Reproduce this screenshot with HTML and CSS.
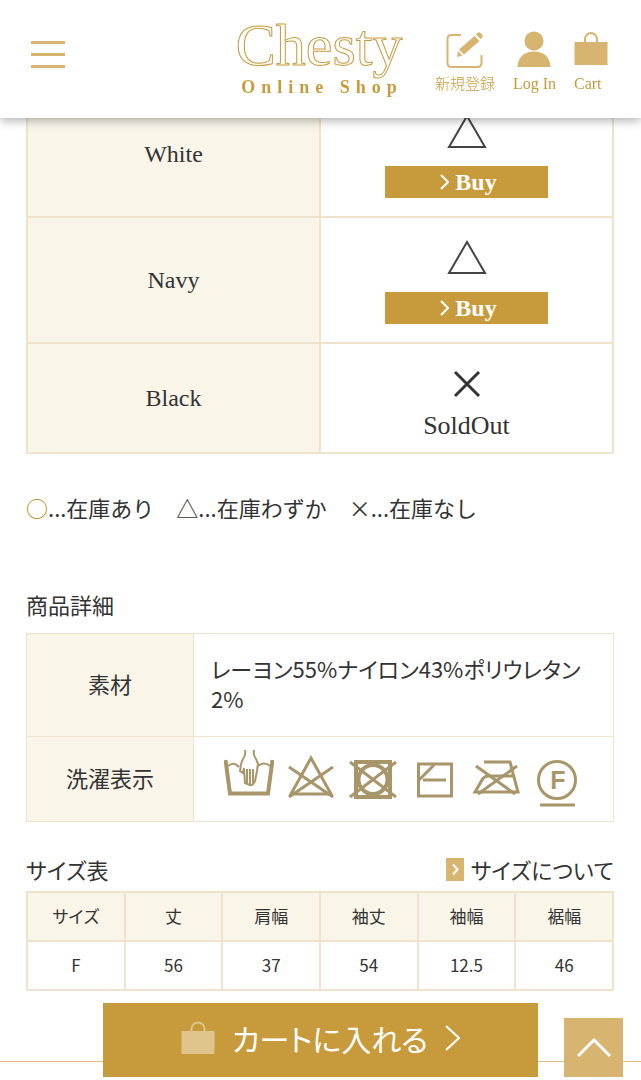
FILE: index.html
```
<!DOCTYPE html>
<html lang="ja">
  <head>
    <meta charset="UTF-8" />
    <meta name="viewport" content="width=device-width, initial-scale=1.0" />
    <title>Chesty Online Shop</title>
    <link rel="stylesheet" href="styles.css">
  </head>
  <body>
    <header class="header">
      <button class="menu" type="button" aria-label="メニュー">
        <svg width="34" height="28" viewBox="0 0 34 28">
          <path d="M0 2.5H34M0 14.5H34M0 26.5H34" />
        </svg>
      </button>
      <a class="logo" href="#">
        <span class="logo-name">Chesty</span>
        <span class="logo-sub">Online Shop</span>
      </a>
      <nav class="nav">
        <a class="nav-item" href="#">
          <svg width="38" height="38" viewBox="0 0 38 38">
            <path class="line" d="M15 4H5.500Q1.500 4 1.500 8V32Q1.500 36 5.500 36H31Q35.500 36 35.500 31.500V24" />
            <path class="fill" d="M28.500 5L33.500 10L18 23.500L13 18.500Z" />
            <path class="fill" d="M30 3.500L31.500 2Q33 .5 35 2.500L36 3.500Q37.500 5.500 36 7L34.800 8.200Z" />
            <path class="fill" d="M12 20L16.500 24.500L11 26Z" />
          </svg>
          <span>新規登録</span>
        </a>
        <a class="nav-item" href="#">
          <svg width="34" height="38" viewBox="0 0 34 38">
            <circle class="fill" cx="17" cy="10" r="9.500" />
            <path class="fill" d="M.5 36C1 26 7 20.500 17 20.500S33 26 33.500 36Z" />
          </svg>
          <span>Log In</span>
        </a>
        <a class="nav-item nav-cart" href="#">
          <svg width="34" height="38" viewBox="0 0 34 38">
            <path class="fill" d="M.5 11H33.500V34H.5Z" />
            <path class="line" d="M11 12V8.500A6 6.500 0 0 1 23 8.500V12" />
          </svg>
          <span>Cart</span>
        </a>
      </nav>
    </header>

    <main class="main">
      <table class="stock">
        <tr>
          <th>White</th>
          <td>
            <svg class="mark" role="img" aria-label="在庫わずか" width="40" height="36" viewBox="0 0 40 36"><path d="M20 2L38 33H2Z" /></svg>
            <button class="buy" type="button">
              <svg width="9" height="16" viewBox="0 0 9 16"><path d="M1 1L8 8L1 15" /></svg>Buy
            </button>
          </td>
        </tr>
        <tr>
          <th>Navy</th>
          <td>
            <svg class="mark" role="img" aria-label="在庫わずか" width="40" height="36" viewBox="0 0 40 36"><path d="M20 2L38 33H2Z" /></svg>
            <button class="buy" type="button">
              <svg width="9" height="16" viewBox="0 0 9 16"><path d="M1 1L8 8L1 15" /></svg>Buy
            </button>
          </td>
        </tr>
        <tr>
          <th>Black</th>
          <td>
            <svg class="mark cross" role="img" aria-label="在庫なし" width="40" height="36" viewBox="0 0 40 36"><path d="M8 6L32 30M32 6L8 30" /></svg>
            <p class="soldout">SoldOut</p>
          </td>
        </tr>
      </table>

      <p class="legend"><span class="in-stock">○</span>...在庫あり　△...在庫わずか　×...在庫なし</p>

      <h2 class="title">商品詳細</h2>
      <table class="detail">
        <tr>
          <th>素材</th>
          <td>レーヨン55%ナイロン43%ポリウレタン2%</td>
        </tr>
        <tr>
          <th>洗濯表示</th>
          <td class="care-cell">
            <div class="care">
              <!-- hand wash -->
              <svg width="50" height="60" viewBox="0 0 50 60">
                <path class="thick" d="M1.500 11L6 44.500H44L48.500 11" />
                <path d="M4 17Q10 12 15 18M34 17Q40 12 46 17" />
                <path d="M21 1Q22 6 19 10L17 15L16 22L19 24L20 19M30 1Q29 6 32 10L34 15L33 22L31 32Q29 37 26 36L21 34L20 20" />
                <path d="M23 20V34M26 20V35M29 20V34" />
              </svg>
              <!-- no bleach -->
              <svg width="50" height="60" viewBox="0 0 50 60">
                <path class="mid" d="M25 9L5 45H45Z" />
                <path class="mid" d="M3 18L47 48M47 18L3 48" />
              </svg>
              <!-- no tumble dry -->
              <svg width="50" height="60" viewBox="0 0 50 60">
                <path class="thick" d="M8 13H42V48H8Z" />
                <circle class="thick" cx="25" cy="30.500" r="14.500" />
                <path class="mid" d="M2 13L48 48M48 13L2 48" />
              </svg>
              <!-- line dry in the shade -->
              <svg width="50" height="60" viewBox="0 0 50 60">
                <path class="mid" d="M8.500 15H41.500V47H8.500Z" />
                <path class="mid" d="M9 31L24 16M13 31H36" />
              </svg>
              <!-- no iron -->
              <svg width="50" height="60" viewBox="0 0 50 60">
                <path class="mid" d="M12 13H38L46 43H3L10 31Q12 27 17 27H41" />
                <path class="mid" d="M4 17L43 45M45 17L6 45" />
              </svg>
              <!-- dry clean F -->
              <svg width="50" height="60" viewBox="0 0 50 60">
                <circle class="mid" cx="23" cy="31" r="18.500" />
                <path class="mid" d="M6 56H41" />
                <text x="24" y="40" text-anchor="middle">F</text>
              </svg>
            </div>
          </td>
        </tr>
      </table>

      <div class="size-head">
        <h2 class="title">サイズ表</h2>
        <a class="size-link" href="#">
          <svg width="18" height="23" viewBox="0 0 18 23"><path d="M0 0H18V23H0Z" /><path class="arrow" d="M7 6.500L11.500 11.500L7 16.500" /></svg>サイズについて
        </a>
      </div>
      <table class="size">
        <tr>
          <th>サイズ</th>
          <th>丈</th>
          <th>肩幅</th>
          <th>袖丈</th>
          <th>袖幅</th>
          <th>裾幅</th>
        </tr>
        <tr>
          <td>F</td>
          <td>56</td>
          <td>37</td>
          <td>54</td>
          <td>12.5</td>
          <td>46</td>
        </tr>
      </table>
    </main>

    <footer class="footer"></footer>

    <button class="add-cart" type="button">
      <svg width="34" height="34" viewBox="0 0 34 34">
        <path class="bag" d="M.5 10H33.500V33H.5Z" />
        <path class="handle" d="M10.500 11V8A6.500 6.500 0 0 1 23.500 8V11" />
      </svg>
      <span>カートに入れる</span>
      <svg width="15" height="26" viewBox="0 0 15 26"><path class="arrow" d="M1 1L14 13L1 25" /></svg>
    </button>
    <a class="to-top" href="#" aria-label="ページの先頭へ">
      <svg width="34" height="20" viewBox="0 0 34 20"><path d="M1 18L17 2L33 18" /></svg>
    </a>
  </body>
</html>
```
FILE: styles.css
```
* {
  margin: 0;
  padding: 0;
  box-sizing: border-box;
}
body {
  font-family: "Noto Sans CJK JP", sans-serif;
  font-feature-settings: "palt";
  font-kerning: none;
  font-size: 22px;
  line-height: 30px;
  color: #333;
  background: #fff;
}
a {
  color: inherit;
  text-decoration: none;
}
button {
  border: none;
  font: inherit;
  font-feature-settings: inherit;
  cursor: pointer;
}
svg {
  display: block;
  flex: none;
  fill: none;
}

/* header */
.header {
  position: fixed;
  top: 0;
  left: 0;
  right: 0;
  z-index: 2;
  height: 118px;
  padding: 0 33px 0 31px;
  display: flex;
  align-items: flex-start;
  background: #fff;
  box-shadow: 0 2px 10px rgba(0, 0, 0, 0.35);
}
.menu {
  margin-top: 40px;
  background: none;
}
.menu svg {
  stroke: #d7b570;
  stroke-width: 3;
}
.logo {
  margin: 12px 32px 0 auto;
  display: flex;
  flex-direction: column;
  align-items: center;
  font-family: "Liberation Serif", serif;
  color: #c79b3c;
}
.logo-name {
  font-size: 60px;
  line-height: 66px;
  color: #fff;
  -webkit-text-stroke: 1px #c79b3c;
}
.logo-sub {
  padding-left: 6px;
  font-size: 18px;
  line-height: 18px;
  font-weight: bold;
  letter-spacing: 6px;
}
.nav {
  margin-top: 31px;
  display: flex;
  gap: 18px;
}
.nav-item {
  display: flex;
  flex-direction: column;
  align-items: center;
  gap: 5px;
  font-family: "Liberation Serif", "Noto Sans CJK JP", serif;
  font-size: 16px;
  font-weight: 300;
  line-height: 20px;
  color: #c79b3c;
}
.nav-item:first-child {
  font-size: 15px;
}
.nav-cart {
  align-items: flex-start;
}
.nav-item .fill {
  fill: #d7b570;
}
.nav-item .line {
  stroke: #d7b570;
  stroke-width: 2;
}

.main {
  padding: 90px 27px 0 26px;
}

/* tables */
table {
  width: 100%;
  table-layout: fixed;
  border-collapse: collapse;
}
th,
td {
  border: 2px solid #efe3cd;
  text-align: center;
  font-weight: normal;
}
th {
  background: #faf5e9;
}
.stock th {
  font-family: "Liberation Serif", serif;
  font-size: 24px;
}
.stock td {
  padding: 22px 0 18px;
}
.stock tr:last-child td {
  padding: 22px 0 11px;
}
.mark {
  margin: 0 auto;
  stroke: #444;
  stroke-width: 2;
}
.cross {
  stroke: #333;
  stroke-width: 3;
}
.buy {
  margin: 16px auto 0;
  padding-left: 4px;
  width: 56%;
  height: 32px;
  display: flex;
  align-items: center;
  justify-content: center;
  gap: 6px;
  background: #c79b3c;
  color: #fff;
  font-family: "Liberation Serif", serif;
  font-size: 24px;
  font-weight: bold;
}
.buy svg {
  stroke: #fff;
  stroke-width: 2;
}
.soldout {
  margin-top: 9px;
  font-family: "Liberation Serif", serif;
  font-size: 26px;
}

.legend {
  margin-top: 38px;
  font-feature-settings: normal;
}
.in-stock {
  color: #b8860b;
}

.title {
  font-size: 22px;
  font-weight: normal;
}
.legend + .title {
  margin-top: 67px;
}

.detail {
  margin-top: 14px;
}
.detail th,
.detail td {
  border-width: 1px;
}
.detail th {
  width: 167px;
  padding-bottom: 4px;
}
.detail td {
  padding: 19px 17px 23px;
  text-align: left;
}
.detail .care-cell {
  padding: 12px 16px 12px 30px;
}
.care {
  display: flex;
  gap: 12px;
}
.care svg {
  stroke: #a8966a;
  stroke-width: 2;
}
.care .mid {
  stroke-width: 3;
}
.care .thick {
  stroke-width: 4;
}
.care text {
  fill: #a8966a;
  stroke: none;
  font-family: "Liberation Sans", sans-serif;
  font-size: 25px;
  font-weight: bold;
}

.size-head {
  margin-top: 32px;
  display: flex;
  justify-content: space-between;
}
.size-link {
  display: flex;
  align-items: center;
  gap: 7px;
}
.size-link svg {
  fill: #d7b570;
}
.size-link .arrow {
  fill: none;
  stroke: #fff;
  stroke-width: 2;
}
.size {
  margin-top: 7px;
  font-size: 17px;
}
.size th,
.size td {
  height: 49px;
  padding-bottom: 1px;
}

.footer {
  margin-top: 70px;
  height: 16px;
  border-top: 1px solid #e6bd84;
}

/* buttons that follow the window */
.add-cart {
  position: fixed;
  left: 16%;
  bottom: 3px;
  width: 68%;
  height: 74px;
  padding-bottom: 4px;
  display: flex;
  align-items: center;
  justify-content: center;
  gap: 17px;
  background: #c79b3c;
  color: #fff;
  font-size: 30px;
}
.add-cart .bag {
  fill: #dfc48c;
}
.add-cart .handle {
  stroke: #dfc48c;
  stroke-width: 2;
}
.add-cart .arrow {
  stroke: #fff;
  stroke-width: 2;
}
.to-top {
  position: fixed;
  right: 18px;
  bottom: 3px;
  width: 59px;
  height: 59px;
  display: flex;
  align-items: center;
  justify-content: center;
  background: #d7b570;
}
.to-top svg {
  stroke: #fff;
  stroke-width: 3;
}
```
